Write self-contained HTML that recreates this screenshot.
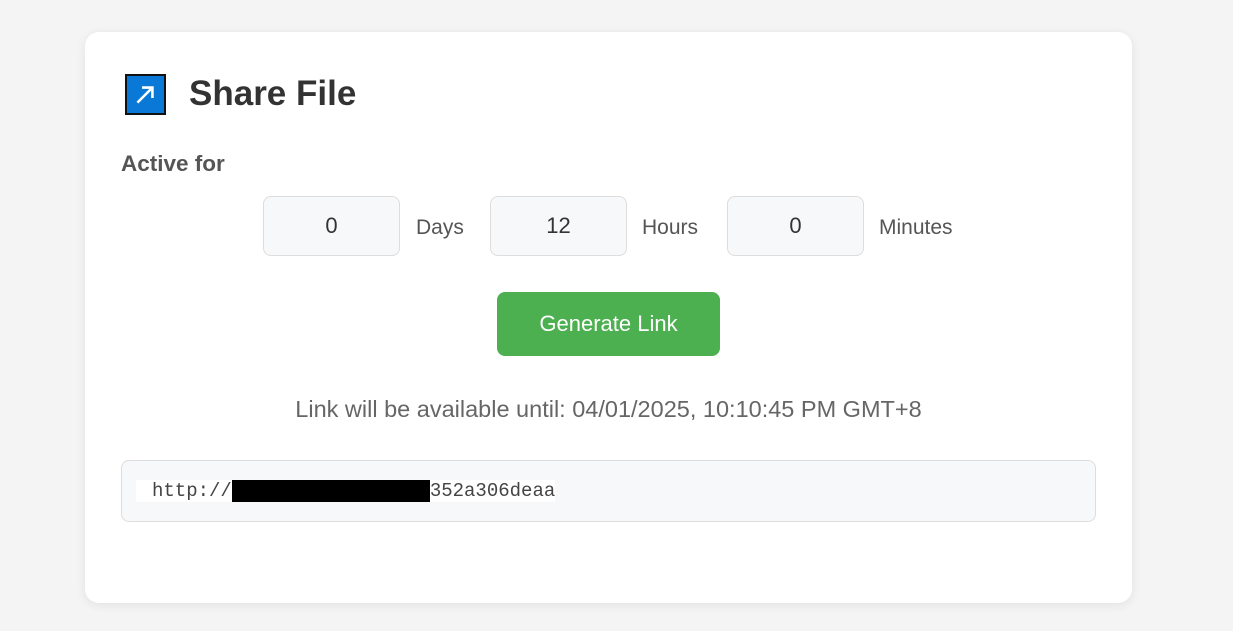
<!DOCTYPE html>
<html><head><style>
body{margin:0;background:#f4f4f4;font-family:"Liberation Sans",sans-serif;width:1233px;height:631px;overflow:hidden}
.card{position:absolute;left:85px;top:32px;width:1047px;height:571px;background:#fff;border-radius:14px;box-shadow:0 2px 10px rgba(0,0,0,0.08)}
.icon{position:absolute;left:40px;top:42px;width:41px;height:41px;background:#0a78d7;border:2px solid #111;box-sizing:border-box}
h1{position:absolute;left:104px;top:42px;margin:0;font-size:35px;font-weight:bold;color:#333}
.af{position:absolute;left:36px;top:119px;font-size:22.5px;font-weight:bold;color:#555}
.in{position:absolute;top:164px;width:137px;height:60px;border:1px solid #ddd;border-radius:8px;background:#f7f8fa;box-sizing:border-box;text-align:center;line-height:58px;font-size:22px;color:#333}
.lb{position:absolute;top:184px;font-size:21px;color:#555}
.btn{position:absolute;left:412px;top:260px;width:223px;height:64px;background:#4caf50;border-radius:8px;color:#fff;font-size:22px;text-align:center;line-height:64px}
.until{position:absolute;left:0;width:1047px;top:364px;text-align:center;font-size:23.5px;color:#666}
.link{position:absolute;left:36px;top:428px;width:975px;height:62px;border:1px solid #ddd;border-radius:8px;background:#f7f8fa;box-sizing:border-box}
.url{position:absolute;left:14px;top:19px;font-family:"Liberation Mono",monospace;font-size:19px;color:#444;background:#fff;padding-left:16px;line-height:22px}
.red{display:inline-block;width:198px;height:22px;background:#000;vertical-align:top}
</style></head><body>
<div class="card">
<div class="icon"><svg width="37" height="37" viewBox="0 0 32 32"><path d="M9 23 L22 10 M13 10 H22 V19" stroke="#fff" stroke-width="2.2" fill="none"/></svg></div>
<h1>Share File</h1>
<div class="af">Active for</div>
<div class="in" style="left:178px">0</div><div class="lb" style="left:331px">Days</div>
<div class="in" style="left:405px">12</div><div class="lb" style="left:557px">Hours</div>
<div class="in" style="left:642px">0</div><div class="lb" style="left:794px">Minutes</div>
<div class="btn">Generate Link</div>
<div class="until">Link will be available until: 04/01/2025, 10:10:45 PM GMT+8</div>
<div class="link"><div class="url">http://<span class="red"></span>352a306deaa</div></div>
</div>
</body></html>
